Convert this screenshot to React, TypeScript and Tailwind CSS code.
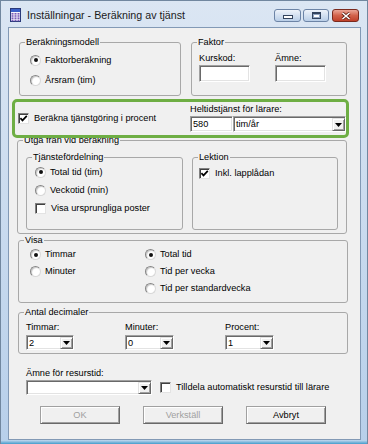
import React from 'react';

const sunken =
  'bg-white border border-[#a0a0a0] border-r-[#ffffff] border-b-[#ffffff] shadow-[inset_1px_1px_0_#696969,inset_-1px_-1px_0_#e3e3e3]';

function Radio({ label, checked = false }: { label: string; checked?: boolean }) {
  return (
    <div className="flex items-center h-full">
      <span className="w-[11px] h-[11px] shrink-0 rounded-full border border-[#858585] border-r-[#d8d8d8] border-b-[#d8d8d8] bg-white shadow-[inset_1px_1px_1px_#c8c8c8] flex items-center justify-center">
        {checked && <span className="w-[4px] h-[4px] rounded-full bg-[#111111]" />}
      </span>
      <span className="ml-[4px] whitespace-nowrap">{label}</span>
    </div>
  );
}

function CheckBox({ label, checked = false }: { label: string; checked?: boolean }) {
  return (
    <div className="flex items-center h-full">
      <span className="w-[11px] h-[11px] shrink-0 bg-white border border-[#808080] border-r-[#e3e3e3] border-b-[#e3e3e3] shadow-[inset_1px_1px_0_#404040] flex items-center justify-center">
        {checked && (
          <svg width="9" height="9" viewBox="0 0 9 9">
            <path d="M1.4 4.2 L3.5 6.4 L7.8 1.8" fill="none" stroke="#000" strokeWidth="1.7" />
          </svg>
        )}
      </span>
      <span className="ml-[5px] whitespace-nowrap">{label}</span>
    </div>
  );
}

function DropBtn() {
  return (
    <span className="w-[13px] shrink-0 bg-[#f0f0f0] border border-[#e3e3e3] border-r-[#696969] border-b-[#696969] shadow-[inset_1px_1px_0_#ffffff,inset_-1px_-1px_0_#a0a0a0] flex items-center justify-center">
      <svg width="7" height="4" viewBox="0 0 7 4">
        <path d="M0 0H7L3.5 4Z" fill="#000" />
      </svg>
    </span>
  );
}

function Combo({ value = '', className = '' }: { value?: string; className?: string }) {
  return (
    <div className={`${sunken} flex pt-[1px] ${className}`}>
      <span className="flex-1 pl-[2px] flex items-center">{value}</span>
      <DropBtn />
    </div>
  );
}

function Btn({ label, disabled = false }: { label: string; disabled?: boolean }) {
  return (
    <div
      className={`w-[80px] h-[18px] flex items-center justify-center bg-[#f0f0f0] border border-[#a0a0a0] border-r-[#696969] border-b-[#696969] shadow-[inset_1px_1px_0_#ffffff,inset_-1px_-1px_0_#a0a0a0] ${
        disabled ? 'text-[#a0a0a0]' : 'text-black'
      }`}
    >
      {label}
    </div>
  );
}

function Group({ title, className = '', children }: { title: string; className?: string; children?: React.ReactNode }) {
  return (
    <fieldset className={`min-w-0 border border-[#a8a8a8] rounded-[3px] px-[5px] ${className}`}>
      <legend className="px-[1px] leading-[11px]">{title}</legend>
      {children}
    </fieldset>
  );
}

function TitleIcon() {
  return (
    <svg width="11" height="14" viewBox="0 0 11 14">
      <rect x="0.5" y="0.5" width="10" height="13" fill="#f4f4fb" stroke="#2a3a7a" />
      <rect x="1" y="1" width="9" height="3" fill="#3a5fc8" />
      {[0, 1, 2].map((c) =>
        [0, 1, 2, 3].map((r) => (
          <rect key={`${c}-${r}`} x={1.5 + c * 3} y={5 + r * 2.2} width="2" height="1.6" fill="#7a5cb8" />
        ))
      )}
    </svg>
  );
}

export default function App() {
  return (
    <div className="w-[368px] h-[444px] flex flex-col overflow-hidden bg-gradient-to-b from-[#dbe6f3] to-[#b7cfea] border border-b-0 border-[#71879f] font-['Liberation_Sans',Arial,sans-serif] text-[9.2px] leading-[11px] text-black">
      {/* title bar */}
      <div className="h-[26px] shrink-0 flex items-start">
        <div className="ml-[9px] mt-[7px]">
          <TitleIcon />
        </div>
        <span className="ml-[6px] mt-[8px] text-[10.7px] leading-[13px] text-[#1b1b1b] whitespace-nowrap">
          Inställningar - Beräkning av tjänst
        </span>
        <div className="ml-auto mt-[8px] mr-[8px] flex">
          <div className="w-[27px] h-[13px] rounded-[3px] border border-[#6c84a6] bg-gradient-to-b from-[#eef3fa] to-[#b9cee7] flex items-end justify-center pb-[2px]">
            <span className="w-[10px] h-[4px] bg-white border border-[#33445e]" />
          </div>
          <div className="ml-[2px] w-[26px] h-[13px] rounded-[3px] border border-[#6c84a6] bg-gradient-to-b from-[#eef3fa] to-[#b9cee7] flex items-center justify-center">
            <span className="w-[9px] h-[7px] bg-white border border-[#33445e] border-t-2 shadow-[inset_0_0_0_1px_#8fa3bf]" />
          </div>
          <div className="ml-[3px] w-[27px] h-[13px] rounded-[3px] border border-[#7a2a1e] bg-gradient-to-b from-[#eaa596] via-[#d2624b] to-[#c0402a] flex items-center justify-center">
            <svg width="10" height="8" viewBox="0 0 10 8">
              <path d="M1.5 1 L8.5 7 M8.5 1 L1.5 7" stroke="#5a1d12" strokeWidth="3" />
              <path d="M1.5 1 L8.5 7 M8.5 1 L1.5 7" stroke="#ffffff" strokeWidth="1.6" />
            </svg>
          </div>
        </div>
      </div>

      {/* client area */}
      <div className="ml-[7px] w-[353px] h-[413px] shrink-0 border border-[#8299b5] bg-[#f0f0f0] flex flex-col">
        {/* row 1 */}
        <div className="mt-[9px] flex">
          <Group title="Beräkningsmodell" className="ml-[10px] w-[162px] h-[59px]">
            <div className="ml-[5px] pt-[2px]">
              <div className="h-[20px]">
                <Radio label="Faktorberäkning" checked />
              </div>
              <div className="h-[20px]">
                <Radio label="Årsram (tim)" />
              </div>
            </div>
          </Group>
          <Group title="Faktor" className="ml-[10px] w-[156px] h-[59px]">
            <div className="ml-[2px] pt-[5px] flex">
              <div className="w-[76px]">
                <div>Kurskod:</div>
                <div className={`${sunken} mt-[1px] w-[51px] h-[17px]`} />
              </div>
              <div>
                <div>Ämne:</div>
                <div className={`${sunken} mt-[1px] w-[51px] h-[17px]`} />
              </div>
            </div>
          </Group>
        </div>

        {/* highlighted row */}
        <div className="relative z-10 mt-[3px] ml-[3px] w-[337px] h-[39px] border-[3px] border-[#6eae44] rounded-[5px] bg-[#f0f0f0] flex">
          <div className="w-[175px] pl-[3px] flex items-center">
            <CheckBox label="Beräkna tjänstgöring i procent" checked />
          </div>
          <div className="pt-[2px]">
            <div>Heltidstjänst för lärare:</div>
            <div className="mt-[1px] flex">
              <div className={`${sunken} w-[43px] h-[16px] pl-[2px] flex items-center`}>580</div>
              <Combo value="tim/år" className="w-[113px] h-[16px]" />
            </div>
          </div>
        </div>

        {/* Utgå från vid beräkning */}
        <Group title="Utgå från vid beräkning" className="mt-[-3px] ml-[8px] w-[330px] h-[99px]">
          <div className="mt-[6px] ml-[3px] flex">
            <Group title="Tjänstefördelning" className="w-[157px] h-[78px]">
              <div className="ml-[3px]">
                <div className="h-[18px]">
                  <Radio label="Total tid (tim)" checked />
                </div>
                <div className="h-[18px]">
                  <Radio label="Veckotid (min)" />
                </div>
                <div className="h-[18px]">
                  <CheckBox label="Visa ursprungliga poster" />
                </div>
              </div>
            </Group>
            <Group title="Lektion" className="ml-[9px] w-[146px] h-[78px]">
              <div className="ml-[1px] pt-[1px] h-[19px]">
                <CheckBox label="Inkl. lapplådan" checked />
              </div>
            </Group>
          </div>
        </Group>

        {/* Visa */}
        <Group title="Visa" className="mt-[1px] ml-[9px] w-[330px] h-[68px]">
          <div className="ml-[6px] flex">
            <div className="w-[115px]">
              <div className="h-[17px]">
                <Radio label="Timmar" checked />
              </div>
              <div className="h-[17px]">
                <Radio label="Minuter" />
              </div>
            </div>
            <div>
              <div className="h-[17px]">
                <Radio label="Total tid" checked />
              </div>
              <div className="h-[17px]">
                <Radio label="Tid per vecka" />
              </div>
              <div className="h-[17px]">
                <Radio label="Tid per standardvecka" />
              </div>
            </div>
          </div>
        </Group>

        {/* Antal decimaler */}
        <Group title="Antal decimaler" className="mt-[4px] ml-[9px] w-[330px] h-[47px]">
          <div className="ml-[2px] pt-[4px] flex">
            <div className="w-[99px]">
              <div>Timmar:</div>
              <Combo value="2" className="mt-[2px] w-[48px] h-[15px]" />
            </div>
            <div className="w-[100px]">
              <div>Minuter:</div>
              <Combo value="0" className="mt-[2px] w-[49px] h-[15px]" />
            </div>
            <div>
              <div>Procent:</div>
              <Combo value="1" className="mt-[2px] w-[49px] h-[15px]" />
            </div>
          </div>
        </Group>

        {/* Ämne för resurstid */}
        <div className="mt-[14px] ml-[17px]">Ämne för resurstid:</div>
        <div className="mt-[1px] ml-[17px] flex items-center">
          <Combo className="w-[126px] h-[15px]" />
          <div className="ml-[8px]">
            <CheckBox label="Tilldela automatiskt resurstid till lärare" />
          </div>
        </div>

        {/* buttons */}
        <div className="mt-[11px] ml-[31px] flex gap-[23px]">
          <Btn label="OK" disabled />
          <Btn label="Verkställ" disabled />
          <Btn label="Avbryt" />
        </div>
      </div>
      <div className="flex-1 bg-gradient-to-b from-[#c4d9ef] to-[#3e9ccb]" />
    </div>
  );
}
